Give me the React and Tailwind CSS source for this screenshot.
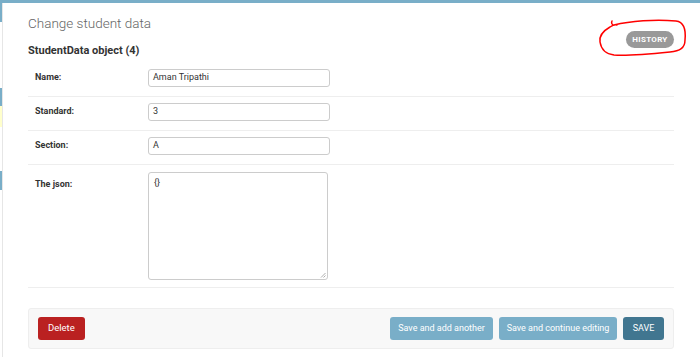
import React from "react";

function Row({ label, children, tall }) {
  return (
    <div className="flex border-b border-[#eeeeee] pt-[6px] pb-[9px] pl-[7px]">
      <div className={`w-[113px] shrink-0 text-[9px] font-bold text-[#333333] ${tall ? "pt-[6px]" : "flex items-center"}`}>
        {label}
      </div>
      {children}
    </div>
  );
}

function Input({ value }) {
  return (
    <div className="w-[182px] h-[18px] border border-[#cccccc] rounded-[3px] px-[4px] flex items-center text-[9px] text-[#333333] bg-white">
      {value}
    </div>
  );
}

export default function App() {
  return (
    <div className="w-[700px] h-[357px] bg-white overflow-hidden relative" style={{ fontFamily: "Roboto, 'Liberation Sans', sans-serif" }}>
      <div className="h-[3px] bg-[#79aec8]" />
      <div className="flex h-[354px]">
        {/* sidebar remnant */}
        <div className="w-[3px] shrink-0 flex flex-col border-r border-[#e6e6e6]">
          <div className="h-[19px] w-[2px] bg-[#79aec8]" />
          <div className="h-[66px]" />
          <div className="h-[18px] w-[2px] bg-[#79aec8]" />
          <div className="h-[21px] w-[2px] bg-[#ffffcc]" />
          <div className="h-[44px]" />
          <div className="h-[19px] w-[2px] bg-[#79aec8]" />
        </div>
        <div className="flex-1 pl-[25px] pr-[26px]">
          <div className="flex justify-between">
            <div className="flex flex-col">
              <h1 className="text-[13.5px] font-light text-[#666666] leading-[18px] mt-[11px]">Change student data</h1>
              <h2 className="text-[11px] font-bold text-[#333333] leading-[14px] mt-[12px]">StudentData object (4)</h2>
            </div>
            <div className="mt-[28px]">
              <div className="h-[17px] w-[48px] justify-center rounded-full bg-[#999999] text-white text-[8px] font-bold tracking-[0.3px] flex items-center">HISTORY</div>
            </div>
          </div>
          <div className="mt-[5px]">
            <Row label="Name:"><Input value="Aman Tripathi" /></Row>
            <Row label="Standard:"><Input value="3" /></Row>
            <Row label="Section:"><Input value="A" /></Row>
            <div className="flex border-b border-[#eeeeee] pt-[7px] pb-[7px] pl-[7px]">
              <div className="w-[113px] shrink-0 text-[9px] font-bold text-[#333333] pt-[6px]">The json:</div>
              <div className="relative w-[180px] h-[108px] border border-[#cccccc] rounded-[3px] px-[5px] pt-[3px] text-[9px] text-[#333333]">
                {"{}"}
                <svg className="absolute right-[1px] bottom-[1px]" width="6" height="6" viewBox="0 0 6 6">
                  <path d="M5.5 1 L1 5.5 M5.5 3.5 L3.5 5.5" stroke="#999" strokeWidth="0.8" />
                </svg>
              </div>
            </div>
          </div>
          <div className="mt-[20px] h-[41px] bg-[#f8f8f8] border border-[#eeeeee] rounded-[3px] flex items-center px-[9px]">
            <div className="h-[23px] px-[10px] rounded-[3px] bg-[#ba2121] text-white text-[9.5px] flex items-center">Delete</div>
            <div className="ml-auto flex gap-[6px]">
              <div className="h-[23px] w-[103px] justify-center rounded-[3px] bg-[#79aec8] text-white text-[9px] flex items-center">Save and add another</div>
              <div className="h-[23px] w-[118px] justify-center rounded-[3px] bg-[#79aec8] text-white text-[9px] flex items-center">Save and continue editing</div>
              <div className="h-[23px] w-[41px] justify-center rounded-[3px] bg-[#417690] text-white text-[9px] flex items-center">SAVE</div>
            </div>
          </div>
        </div>
      </div>
      {/* red annotation */}
      <svg className="absolute left-[596px] top-[16px]" width="94" height="46" viewBox="596 16 94 46" fill="none">
        <path
          d="M612 21 C 611 23, 612 25, 614 25 C 630 21, 655 19, 676 21 C 684 22, 686 30, 685 40 C 685 48, 680 51, 670 52 C 650 54, 630 56, 614 55 C 605 54, 601 48, 600 42 C 599 36, 603 31, 610 27 C 613 25, 615 24, 617 25"
          stroke="#ff0000"
          strokeWidth="1.5"
          strokeLinecap="round"
        />
      </svg>
    </div>
  );
}
